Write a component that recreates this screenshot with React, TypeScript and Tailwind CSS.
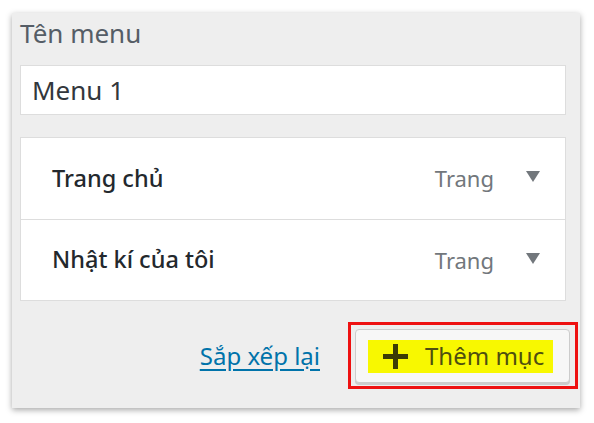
export default function App() {
  const items = [
    { title: 'Trang chủ', type: 'Trang' },
    { title: 'Nhật kí của tôi', type: 'Trang' },
  ];

  return (
    <div className="w-[594px] h-[423px] bg-white pt-[13px] pl-[12px] font-['Noto_Sans',sans-serif]">
      <div className="w-[568px] h-[395px] bg-[#eeeeee] shadow-[0_2px_6px_rgba(0,0,0,0.35)] pl-[8px] pr-[14px] pt-[4px]">
        {/* Menu name */}
        <label className="block text-[26px] leading-[32px] text-[#555d66]">Tên menu</label>
        <div className="mt-[16px] h-[50px] bg-white border border-[#dddddd] flex items-center pl-[11px] text-[26px] text-[#32373c]">
          Menu 1
        </div>

        {/* Items */}
        <div className="mt-[22px] bg-white border border-[#dddddd]">
          {items.map((item, i) => (
            <div
              key={i}
              className={`h-[81px] flex items-center pl-[31px] pr-[25px] ${i > 0 ? 'border-t border-[#dddddd]' : ''}`}
            >
              <span className="text-[23.5px] font-medium text-[#23282d]">{item.title}</span>
              <span className="ml-auto text-[22px] text-[#72777c]">{item.type}</span>
              <svg width="14" height="11" viewBox="0 0 14 11" className="ml-[32px] -mt-[4px]">
                <polygon points="0,0 14,0 7,11" fill="#72777c" />
              </svg>
            </div>
          ))}
        </div>

        {/* Footer */}
        <div className="mt-[21px] flex items-center justify-end -mr-[12px]">
          <a href="#" className="text-[24px] text-[#0073aa] underline underline-offset-[4px] mr-[28px]">
            Sắp xếp lại
          </a>
          <div className="w-[230px] h-[67px] border-[3px] border-[#ee1111] pl-[4px] pt-[4px]">
            <button className="w-[215px] h-[54px] rounded-[4px] bg-[#f7f7f7] border border-[#cccccc] shadow-[0_2px_0_#cccccc] flex items-center pl-[12px]">
              <span className="h-[33px] w-[185px] bg-[#f8f800] flex items-center pl-[15px]">
                <svg width="25" height="25" viewBox="0 0 25 25">
                  <rect x="10" y="0" width="5" height="25" fill="#3c3c05" />
                  <rect x="0" y="10" width="25" height="5" fill="#3c3c05" />
                </svg>
                <span className="ml-[17px] text-[24px] text-[#4f4f10]">Thêm mục</span>
              </span>
            </button>
          </div>
        </div>
      </div>
    </div>
  );
}
